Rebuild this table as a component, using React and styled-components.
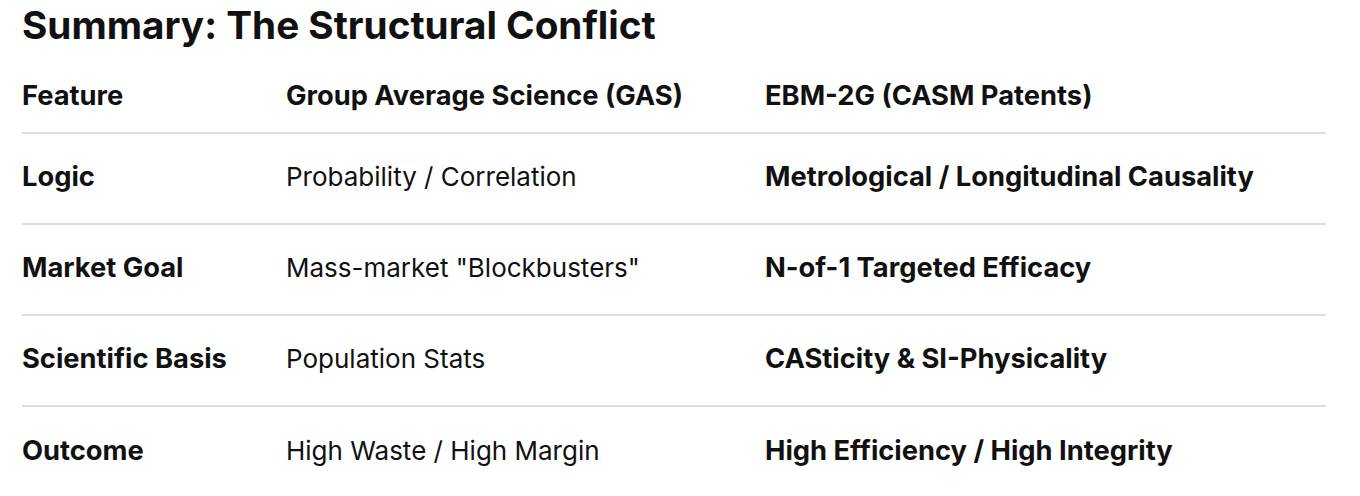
import React from 'react';
import styled, { createGlobalStyle } from 'styled-components';

const rows = [
  { feature: 'Logic', gas: 'Probability / Correlation', ebm: 'Metrological / Longitudinal Causality' },
  { feature: 'Market Goal', gas: 'Mass-market "Blockbusters"', ebm: 'N-of-1 Targeted Efficacy' },
  { feature: 'Scientific Basis', gas: 'Population Stats', ebm: 'CASticity & SI-Physicality' },
  { feature: 'Outcome', gas: 'High Waste / High Margin', ebm: 'High Efficiency / High Integrity' },
];

const App = () => (
  <>
    <GlobalStyle />
    <StyledPage>
      <StyledTitle>Summary: The Structural Conflict</StyledTitle>
      <StyledTable>
        <StyledRow $header>
          <StyledCell $bold>Feature</StyledCell>
          <StyledCell $bold>Group Average Science (GAS)</StyledCell>
          <StyledCell $bold>EBM-2G (CASM Patents)</StyledCell>
        </StyledRow>
        {rows.map((row, i) => (
          <StyledRow key={row.feature} $last={i === rows.length - 1}>
            <StyledCell $bold>{row.feature}</StyledCell>
            <StyledCell>{row.gas}</StyledCell>
            <StyledCell $bold>{row.ebm}</StyledCell>
          </StyledRow>
        ))}
      </StyledTable>
    </StyledPage>
  </>
);

const GlobalStyle = createGlobalStyle`
  * {
    box-sizing: border-box;
  }

  body {
    margin: 0;
    background: #ffffff;
    color: #1f1f1f;
    font-family: Inter, "Noto Sans", sans-serif;
  }
`;

const StyledPage = styled.div`
  padding: 0 34px 0 22px;
  width: 1360px;
`;

const StyledTitle = styled.h2`
  margin: 0;
  height: 58px;
  line-height: 50px;
  font-size: 38.7px;
  font-weight: 700;
  color: #111111;
`;

const StyledTable = styled.div`
  display: flex;
  flex-direction: column;
`;

const StyledRow = styled.div`
  display: grid;
  grid-template-columns: 264px 479px 1fr;
  align-items: center;
  height: ${({ $header }) => ($header ? '76px' : '91px')};
  padding-top: ${({ $header }) => ($header ? '2px' : '0')};
  padding-bottom: ${({ $header }) => ($header ? '0' : '3px')};
  border-bottom: ${({ $last }) => ($last ? 'none' : '2px solid #dddde1')};
`;

const StyledCell = styled.div`
  font-size: ${({ $bold }) => ($bold ? '27.3px' : '26px')};
  font-weight: ${({ $bold }) => ($bold ? 700 : 400)};
  line-height: 32px;
  color: #111111;
`;

export default App;
